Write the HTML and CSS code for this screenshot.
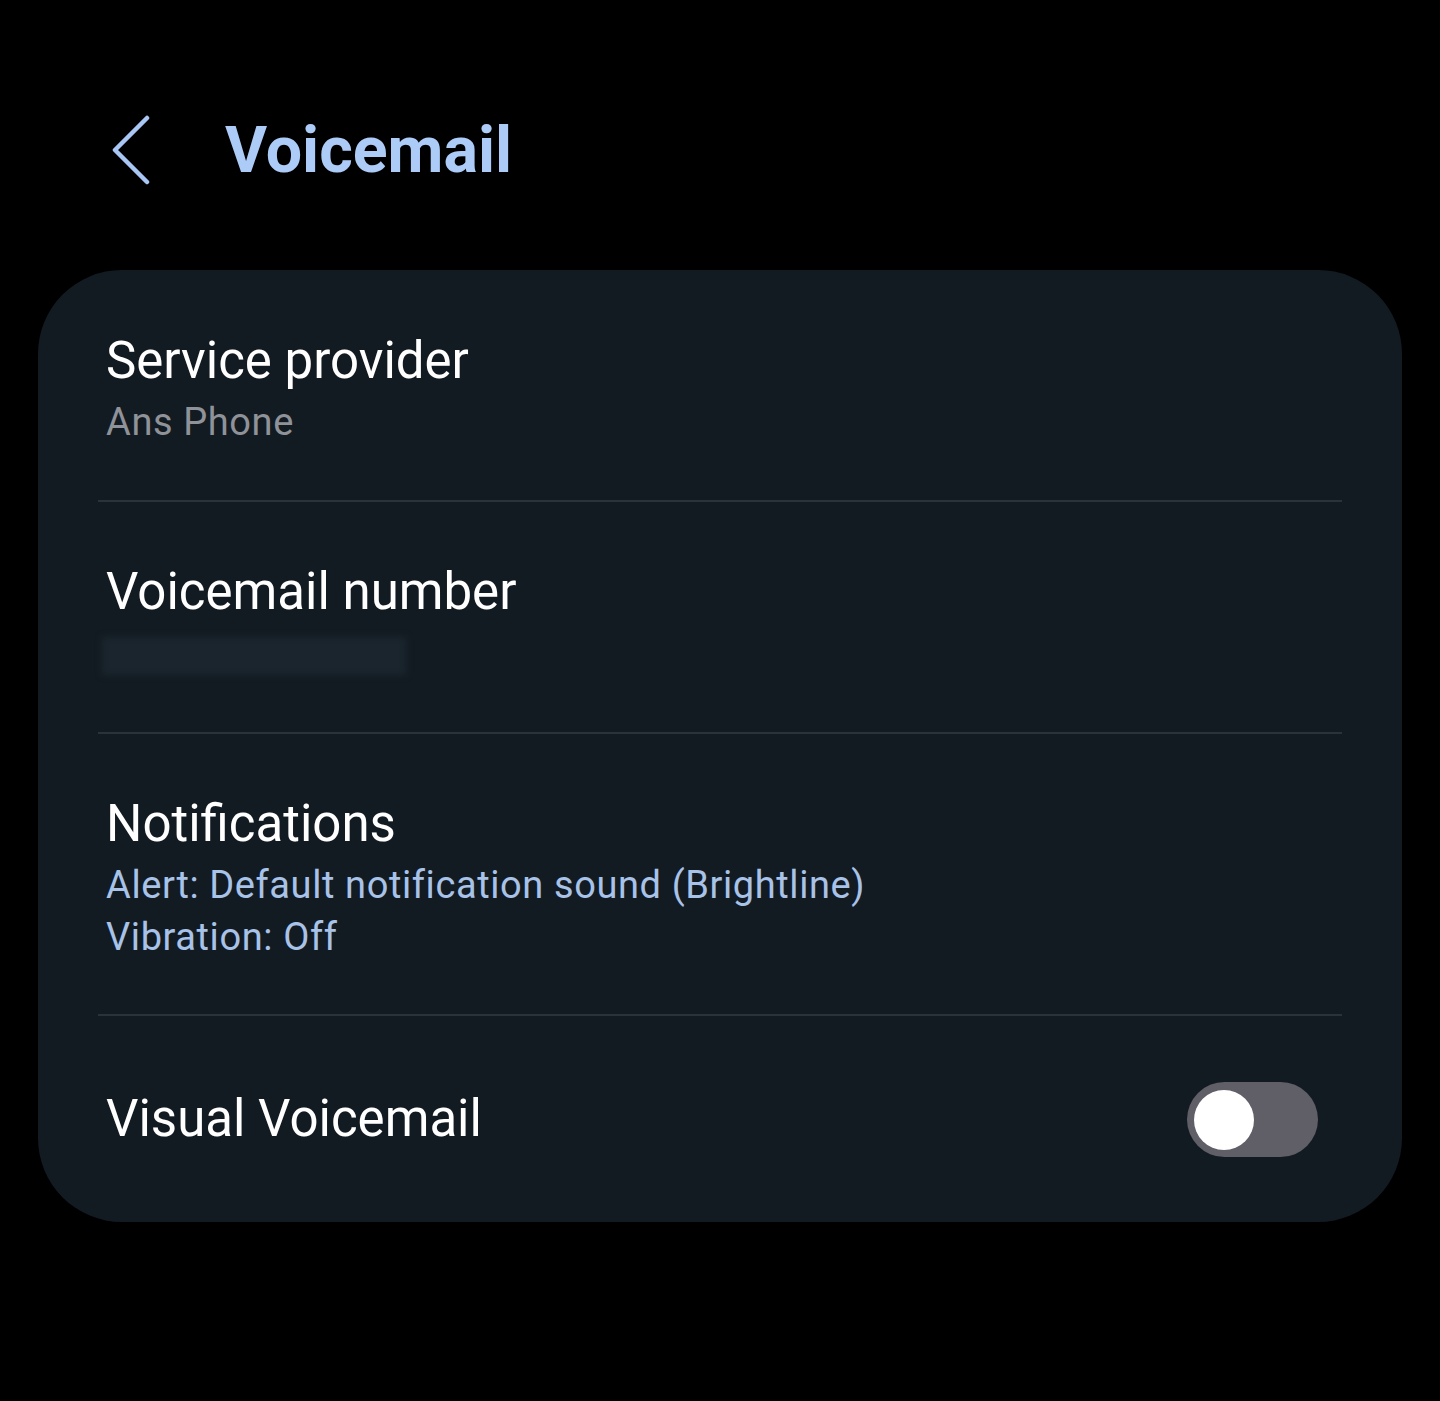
FILE: index.html
```html
<!DOCTYPE html>
<html lang="en">
  <head>
    <meta http-equiv="Content-Type" content="text/html;charset=utf-8" />
    <meta name="viewport" content="width=device-width, initial-scale=1.0" />
    <title>Voicemail</title>
    <link rel="stylesheet" href="styles.css">
  </head>
  <body>
    <header class="header">
      <button class="header__back" aria-label="back">
        <svg viewBox="0 0 40 70" width="40" height="70">
          <path d="M36 3 L4 35 L36 67" fill="none" stroke="currentColor" stroke-width="4.5" stroke-linecap="round" stroke-linejoin="round" />
        </svg>
      </button>
      <h1 class="header__title">Voicemail</h1>
    </header>
    <main class="card">
      <div class="card__row">
        <div class="row__title">Service provider</div>
        <div class="row__sub">Ans Phone</div>
      </div>
      <div class="card__row">
        <div class="row__title">Voicemail number</div>
        <div class="row__masked"></div>
      </div>
      <div class="card__row">
        <div class="row__title">Notifications</div>
        <div class="row__sub row__sub--accent">Alert: Default notification sound (Brightline)</div>
        <div class="row__sub row__sub--accent">Vibration: Off</div>
      </div>
      <div class="card__row card__row--switch">
        <div class="row__title">Visual Voicemail</div>
        <span class="switch" role="switch" aria-checked="false"><span class="switch__knob"></span></span>
      </div>
    </main>
  </body>
</html>
```

FILE: styles.css
```css
body {
  margin: 0;
  background-color: #000;
  color: #fff;
  font-family: Roboto, "Noto Sans", sans-serif;
  min-height: 1401px;
}
.header {
  display: flex;
  align-items: center;
  height: 300px;
  padding: 0 0 0 111px;
  box-sizing: border-box;
  margin-bottom: -30px;
}
.header__back {
  background: none;
  border: 0;
  padding: 0;
  color: #a9c7f5;
  width: 40px;
  height: 70px;
}
.header__back svg {
  display: block;
}
.header__title {
  margin: 0 0 0 74px;
  font-size: 64.5px;
  font-weight: 700;
  color: #adcbf7;
}
.card {
  margin: 0 38px;
  background-color: #131b22;
  border-radius: 84px;
  padding: 0 60px;
}
.card__row {
  border-bottom: 2px solid #2b3238;
  padding: 0 8px;
}
.card__row:nth-child(1) {
  padding-top: 56px;
  height: 174px;
}
.card__row:nth-child(2) {
  padding-top: 55px;
  height: 175px;
}
.card__row:nth-child(3) {
  padding-top: 55px;
  height: 225px;
}
.card__row--switch {
  border-bottom: 0;
  display: flex;
  align-items: center;
  justify-content: space-between;
  height: 206px;
  padding-right: 24px;
}
.row__title {
  font-size: 51px;
  line-height: 70px;
}
.row__sub {
  font-size: 38px;
  line-height: 52px;
  letter-spacing: 0.6px;
  color: #8f9298;
}
.row__sub--accent {
  color: #a8c2e8;
}
.row__masked {
  margin: 10px 0 0 -4px;
  width: 304px;
  height: 38px;
  background-color: #1a252d;
  filter: blur(3px);
}
.switch {
  position: relative;
  display: inline-block;
  width: 131px;
  height: 75px;
  border-radius: 38px;
  background-color: #605f67;
}
.switch__knob {
  position: absolute;
  left: 7px;
  top: 8px;
  width: 60px;
  height: 60px;
  border-radius: 50%;
  background-color: #fff;
}
```
